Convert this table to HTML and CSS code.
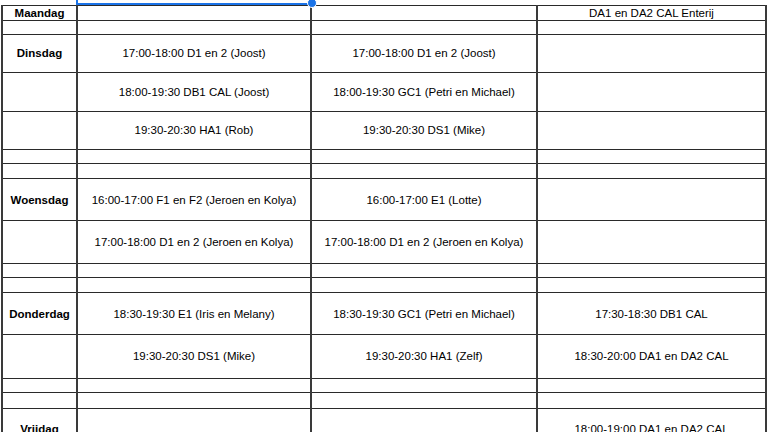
FILE: index.html
```html
<!DOCTYPE html>
<html lang="nl">
<head>
<meta charset="utf-8">
<title>Rooster</title>
<link rel="stylesheet" href="styles.css">
</head>
<body>
<div class="sheet">
  <div class="selection"><span class="handle"></span></div>
  <table class="grid">
    <colgroup>
      <col class="c-day">
      <col class="c-a">
      <col class="c-b">
      <col class="c-c">
    </colgroup>
    <tbody>
      <tr class="r15"><td class="day">Maandag</td><td></td><td></td><td>DA1 en DA2 CAL Enterij</td></tr>
      <tr class="r14"><td></td><td></td><td></td><td></td></tr>
      <tr class="r38"><td class="day">Dinsdag</td><td>17:00-18:00 D1 en 2 (Joost)</td><td>17:00-18:00 D1 en 2 (Joost)</td><td></td></tr>
      <tr class="r39"><td></td><td>18:00-19:30 DB1 CAL (Joost)</td><td>18:00-19:30 GC1 (Petri en Michael)</td><td></td></tr>
      <tr class="r38"><td></td><td>19:30-20:30 HA1 (Rob)</td><td>19:30-20:30 DS1 (Mike)</td><td></td></tr>
      <tr class="r14"><td></td><td></td><td></td><td></td></tr>
      <tr class="r15"><td></td><td></td><td></td><td></td></tr>
      <tr class="r42 low"><td class="day">Woensdag</td><td>16:00-17:00 F1 en F2 (Jeroen en Kolya)</td><td>16:00-17:00 E1 (Lotte)</td><td></td></tr>
      <tr class="r43"><td></td><td>17:00-18:00 D1 en 2 (Jeroen en Kolya)</td><td>17:00-18:00 D1 en 2 (Jeroen en Kolya)</td><td></td></tr>
      <tr class="r14"><td></td><td></td><td></td><td></td></tr>
      <tr class="r15"><td></td><td></td><td></td><td></td></tr>
      <tr class="r42 low"><td class="day">Donderdag</td><td>18:30-19:30 E1 (Iris en Melany)</td><td>18:30-19:30 GC1 (Petri en Michael)</td><td>17:30-18:30 DB1 CAL</td></tr>
      <tr class="r44"><td></td><td>19:30-20:30 DS1 (Mike)</td><td>19:30-20:30 HA1 (Zelf)</td><td>18:30-20:00 DA1 en DA2 CAL</td></tr>
      <tr class="r14"><td></td><td></td><td></td><td></td></tr>
      <tr class="r16"><td></td><td></td><td></td><td></td></tr>
      <tr class="r42"><td class="day">Vrijdag</td><td></td><td></td><td>18:00-19:00 DA1 en DA2 CAL</td></tr>
    </tbody>
  </table>
</div>
</body>
</html>
```

FILE: styles.css
```css
html, body {
  margin: 0;
  padding: 0;
  background: #ffffff;
  overflow: hidden;
}

.sheet {
  position: relative;
  padding: 5px 0 0 1px;
  font-family: "Liberation Sans", Arial, sans-serif;
  font-size: 11.5px;
  color: #000;
}

.grid {
  border-collapse: collapse;
  table-layout: fixed;
  width: 764px;
}

.c-day { width: 75px; }
.c-a { width: 234px; }
.c-b { width: 226px; }
.c-c { width: 229px; }

.grid td {
  border-top: 1px solid #2a2a2a;
  border-bottom: 1px solid #2a2a2a;
  border-left: 2px solid #3a3a3a;
  border-right: 2px solid #3a3a3a;
  padding: 0;
  text-align: center;
  vertical-align: middle;
  white-space: nowrap;
  overflow: hidden;
  line-height: 13px;
}

.grid tr.low td {
  padding-top: 2px;
}

.grid td.day {
  font-weight: bold;
}

.r14 { height: 14px; }
.r15 { height: 15px; }
.r16 { height: 16px; }
.r38 { height: 38px; }
.r39 { height: 39px; }
.r42 { height: 42px; }
.r43 { height: 43px; }
.r44 { height: 44px; }

.selection {
  position: absolute;
  z-index: 1;
  left: 76px;
  top: -20px;
  width: 233px;
  height: 23px;
  border: 2px solid #1a73e8;
  border-top: none;
  pointer-events: none;
}

.handle {
  position: absolute;
  right: -6px;
  bottom: -5px;
  width: 8px;
  height: 8px;
  border-radius: 50%;
  background: #1a73e8;
  border: 1px solid #ffffff;
}
```
